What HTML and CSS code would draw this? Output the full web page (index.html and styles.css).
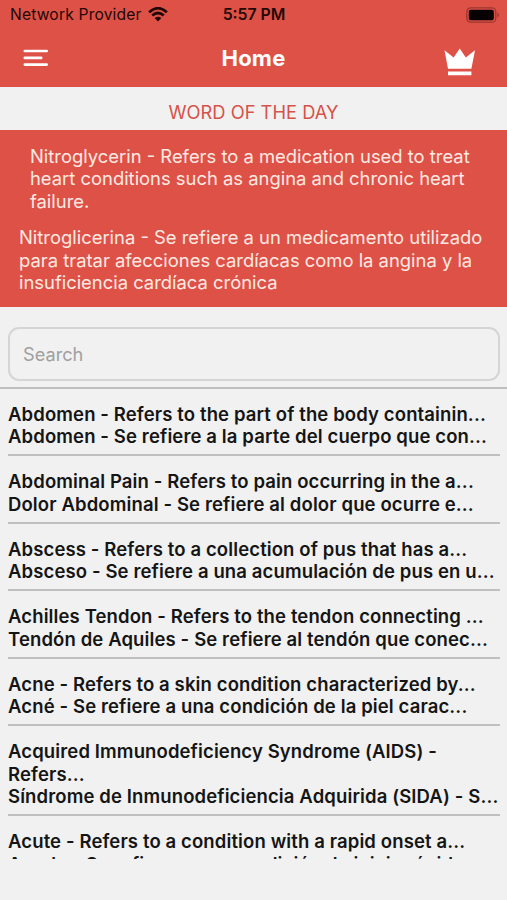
FILE: index.html
```html
<!DOCTYPE html>
<html lang="en">
<head>
<meta charset="utf-8">
<title>Home</title>
<link rel="stylesheet" href="styles.css">
</head>
<body>
<header class="top">
  <div class="status">
    <div class="carrier"><span class="provider">Network Provider</span>
      <svg class="wifi" width="20" height="15" viewBox="0 0 20 15"><g fill="none" stroke="#210806" stroke-width="2.7"><path d="M1.1 5.2Q10-2.8 18.9 5.2"/><path d="M4.2 8.6Q10 3.4 15.8 8.6"/></g><path fill="#210806" d="M6.6 11.1Q10 8.3 13.4 11.1L10 14.6Z"/></svg>
    </div>
    <span class="time">5:57 PM</span>
    <svg class="battery" width="33" height="16" viewBox="0 0 33 16"><rect x=".8" y=".8" width="29" height="14.4" rx="4" fill="none" stroke="#99382f" stroke-width="1.3"/><rect x="2.8" y="2.8" width="25" height="10.4" rx="2" fill="#080101"/><path d="M31.4 5.6Q33 6.4 33 8T31.4 10.4Z" fill="#99382f"/></svg>
  </div>
  <nav class="bar">
    <svg class="menu" width="25" height="18" viewBox="0 0 25 18"><path d="M1.8 2H23.7M1.8 8.9H18.2M1.8 15.6H23.7" stroke="#fff" stroke-width="2.6" stroke-linecap="round"/></svg>
    <h1 class="title">Home</h1>
    <svg class="crown" width="32" height="28" viewBox="0 0 32 28"><path fill="#fff" d="M.5 2.2L9.7 9.5L15.7.5L21.8 9.5L31 2.2L27.4 20.7H4Z M4 23.5H27.4V27.2H4Z"/></svg>
  </nav>
</header>
<h2 class="heading">WORD OF THE DAY</h2>
<section class="word">
  <p class="english"><span class="line">Nitroglycerin - Refers to a medication used to treat</span><span class="line">heart conditions such as angina and chronic heart</span><span class="line">failure.</span></p>
  <p class="spanish"><span class="line">Nitroglicerina - Se refiere a un medicamento utilizado</span><span class="line">para tratar afecciones cardíacas como la angina y la</span><span class="line">insuficiencia cardíaca crónica</span></p>
</section>
<div class="search"><span>Search</span></div>
<main class="list">
  <article class="row"><span class="line">Abdomen - Refers to the part of the body containin...</span><span class="line">Abdomen - Se refiere a la parte del cuerpo que con...</span></article>
  <article class="row"><span class="line">Abdominal Pain - Refers to pain occurring in the a...</span><span class="line">Dolor Abdominal - Se refiere al dolor que ocurre e...</span></article>
  <article class="row"><span class="line">Abscess - Refers to a collection of pus that has a...</span><span class="line">Absceso - Se refiere a una acumulación de pus en u...</span></article>
  <article class="row"><span class="line">Achilles Tendon - Refers to the tendon connecting ...</span><span class="line">Tendón de Aquiles - Se refiere al tendón que conec...</span></article>
  <article class="row"><span class="line">Acne - Refers to a skin condition characterized by...</span><span class="line">Acné - Se refiere a una condición de la piel carac...</span></article>
  <article class="row"><span class="line">Acquired Immunodeficiency Syndrome (AIDS) -</span><span class="line">Refers...</span><span class="line">Síndrome de Inmunodeficiencia Adquirida (SIDA) - S...</span></article>
  <article class="row"><span class="line">Acute - Refers to a condition with a rapid onset a...</span><span class="line">Agudo - Se refiere a una condición de inicio rápido...</span></article>
</main>
</body>
</html>
```
FILE: styles.css
```css
* { box-sizing: border-box; margin: 0; padding: 0; }
body { width: 507px; height: 900px; overflow: hidden; background: #f1f1f1; font-family: Inter, "Liberation Sans", sans-serif; display: flex; flex-direction: column; }
svg { display: block; flex: none; }
.top { height: 87px; background: #de5147; flex: none; }
.status { height: 29px; padding: 0 8px 0 10px; display: grid; grid-template-columns: 1fr auto 1fr; align-items: center; color: #210806; }
.carrier { display: flex; align-items: center; gap: 6px; }
.provider { font-size: 15.6px; letter-spacing: 0.18px; white-space: nowrap; }
.time { font-size: 15.8px; font-weight: 600; white-space: nowrap; margin-right: 1px; }
.battery { justify-self: end; }
.bar { height: 58px; padding: 0 31px 0 23px; display: flex; justify-content: space-between; align-items: center; }
.title { font-size: 22px; line-height: 28px; font-weight: 700; color: #fff; letter-spacing: 0.2px; margin-left: 15px; }
.crown { margin-top: 8px; }
.heading { height: 43px; padding-top: 8px; text-align: center; font-size: 18.3px; line-height: 35px; font-weight: 400; color: #d75248; flex: none; }
.word { height: 177px; padding: 15px 19px 0; background: #de5147; color: #ffe9e2; font-size: 18.4px; line-height: 22.4px; flex: none; }
.line { display: block; white-space: nowrap; width: max-content; }
.english { padding-left: 11px; margin-bottom: 14px; }
.search { height: 54px; margin: 20px 7px 6px 8px; padding-left: 13px; display: flex; align-items: center; border: 2px solid #d5d5d5; border-radius: 11px; color: #a0a0a0; font-size: 18.2px; flex: none; }
.list { height: 472px; overflow: hidden; border-top: 2px solid #bfbfbf; padding: 0 7px 0 8px; flex: none; }
.row { padding: 13.7px 0 6.8px; border-bottom: 2px solid #bfbfbf; font-size: 18.5px; letter-spacing: 0.12px; line-height: 22.5px; font-weight: 600; color: #151515; }
```
